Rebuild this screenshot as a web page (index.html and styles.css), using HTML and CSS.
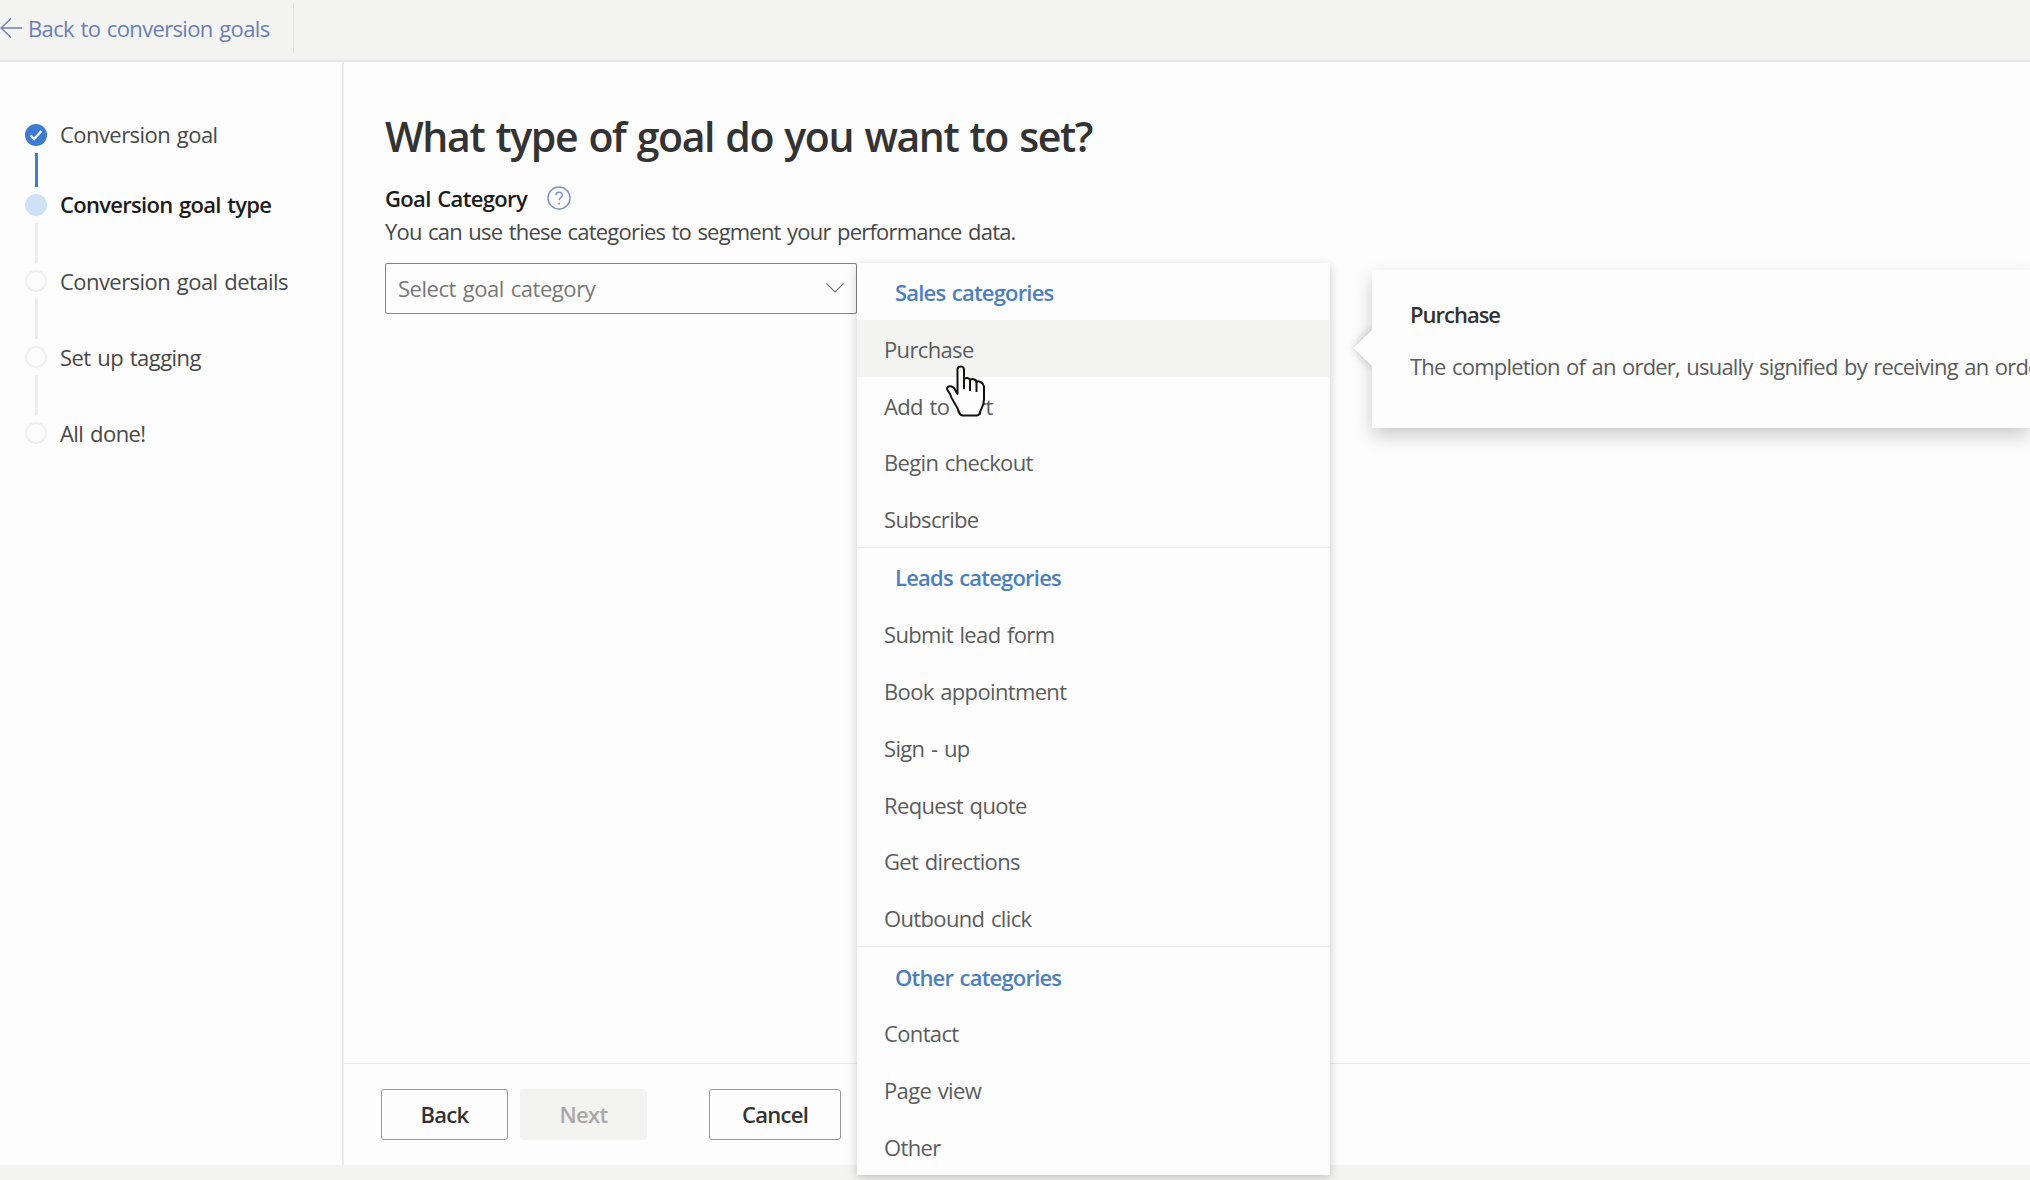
FILE: index.html
```
<!DOCTYPE html>
<html lang="en">
<head>
    <meta charset="UTF-8">
    <meta name="viewport" content="width=device-width, initial-scale=1.0">
    <title>Conversion goals</title>
    <link rel="stylesheet" href="styles.css">
</head>
<body>
    <header class="topbar">
        <a class="back-link" href="#">
            <svg class="back-arrow" viewBox="0 0 22 22"><path d="M22 11H1M11 1.5L1 11l10 9.5"/></svg>
            <span>Back to conversion goals</span>
        </a>
    </header>

    <div class="layout">
        <nav class="sidebar">
            <ol class="steps">
                <li class="step done">
                    <span class="dot"><svg viewBox="0 0 22 22"><path d="M5.5 11.5l3.5 3.5 7.5-8"/></svg></span>
                    <span class="step-name">Conversion goal</span>
                </li>
                <li class="step current">
                    <span class="dot"></span>
                    <span class="step-name">Conversion goal type</span>
                </li>
                <li class="step">
                    <span class="dot"></span>
                    <span class="step-name">Conversion goal details</span>
                </li>
                <li class="step">
                    <span class="dot"></span>
                    <span class="step-name">Set up tagging</span>
                </li>
                <li class="step">
                    <span class="dot"></span>
                    <span class="step-name">All done!</span>
                </li>
            </ol>
        </nav>

        <main class="main">
            <section class="content">
                <h1>What type of goal do you want to set?</h1>
                <div class="field-label">
                    <label>Goal Category</label>
                    <svg class="help" viewBox="0 0 24 24">
                        <circle cx="12" cy="12" r="11"/>
                        <path d="M9 9.3c0-4 6.3-4 6.3-.3 0 2.4-3.2 2.6-3.2 5.3"/>
                        <circle class="help-dot" cx="12.1" cy="17.6" r="1"/>
                    </svg>
                </div>
                <p class="hint">You can use these categories to segment your performance data.</p>

                <div class="picker">
                    <div class="select">
                        <span>Select goal category</span>
                        <svg class="chevron" viewBox="0 0 18 10"><path d="M.5.5L9 9 17.5.5"/></svg>
                    </div>
                    <div class="menu">
                        <ul class="group">
                            <li class="group-name">Sales categories</li>
                            <li class="active">Purchase</li>
                            <li>Add to cart</li>
                            <li>Begin checkout</li>
                            <li>Subscribe</li>
                        </ul>
                        <ul class="group">
                            <li class="group-name">Leads categories</li>
                            <li>Submit lead form</li>
                            <li>Book appointment</li>
                            <li>Sign - up</li>
                            <li>Request quote</li>
                            <li>Get directions</li>
                            <li>Outbound click</li>
                        </ul>
                        <ul class="group">
                            <li class="group-name">Other categories</li>
                            <li>Contact</li>
                            <li>Page view</li>
                            <li>Other</li>
                        </ul>
                    </div>
                    <div class="callout">
                        <h2>Purchase</h2>
                        <p>The completion of an order, usually signified by receiving an order</p>
                    </div>
                </div>
            </section>

            <footer class="actions">
                <button>Back</button>
                <button disabled>Next</button>
                <button class="cancel">Cancel</button>
            </footer>
        </main>
    </div>

    <svg class="pointer" viewBox="0 0 42 54">
        <path d="M12.5 30V5a3 3 0 0 1 3-2.5 3 3 0 0 1 3.5 2.5V15.500c1-2.500 6-2 6 1 1-2.500 6.500-1.500 6.500 1.500 1.500-1.500 6.500 0 7.500 4.500v13c0 6-3 9-4.500 14-.5 1.500-1.500 2-3 2H18c-2 0-3-1-3.500-2.500C12 41 7 37 5 30 3.500 27 1.500 26 2 24c1-2.500 5-2 7 0 1.500 2 2 4 3.500 6z"/>
        <path d="M19 15v10M25 16.5V27M31.5 18v10"/>
    </svg>
</body>
</html>
```
FILE: styles.css
```
* {
    box-sizing: border-box;
}
body {
    margin: 0;
    height: 1180px;
    display: flex;
    flex-direction: column;
    overflow: hidden;
    background: #f3f3f2;
    color: #4b4b4b;
    font-family: "Open Sans", "Noto Sans", sans-serif;
    font-size: 22px;
    line-height: 30px;
    letter-spacing: -0.65px;
    word-spacing: 1.5px;
}
h1, h2, p, ul, ol {
    margin: 0;
    padding: 0;
    list-style: none;
}
svg {
    display: block;
    fill: none;
}

.topbar {
    flex: none;
    height: 62px;
    padding: 3px 0 8px;
    border-bottom: 2px solid #e6e6e6;
}
.back-link {
    display: flex;
    align-items: center;
    gap: 6px;
    width: 294px;
    height: 50px;
    border-right: 1px solid #e0e0e0;
    color: #6a7fb8;
    text-decoration: none;
}
.back-arrow {
    width: 22px;
    height: 22px;
    stroke: #6a7fb8;
    stroke-width: 1.3;
}

.layout {
    display: flex;
    flex: none;
    height: 1103px;
    background: #fdfdfd;
}
.sidebar {
    width: 344px;
    padding: 62px 0 0 25px;
    border-right: 2px solid #ebebeb;
}
.step {
    position: relative;
    display: flex;
    gap: 13px;
    height: 76px;
    color: #484848;
    letter-spacing: -0.55px;
}
.step.done {
    height: 70px;
}
.dot {
    width: 22px;
    height: 22px;
    border: 2px solid #f0f0f0;
    border-radius: 50%;
}
.step-name {
    line-height: 22px;
}
.done .step-name,
.current .step-name {
    line-height: 20px;
}
.done .dot {
    border: 0;
    background: #3d7bd0;
}
.done svg {
    stroke: #fff;
    stroke-width: 2.4;
}
.current .dot {
    border: 0;
    background: #cfe1f5;
}
.current {
    color: #1b1b1b;
    font-weight: 600;
    letter-spacing: -0.7px;
}
/* line between two steps */
.step:not(:last-child)::after {
    content: "";
    position: absolute;
    left: 10px;
    top: 29px;
    bottom: 7px;
    width: 3px;
    background: #ededed;
}
.step.done::after {
    background: #4480c0;
}

.main {
    flex: 1;
    min-width: 0;
    display: flex;
    flex-direction: column;
}
.content {
    flex: 1;
    min-height: 0;
    padding: 45px 0 0 41px;
}
h1 {
    color: #333;
    font-size: 41px;
    font-weight: 600;
    line-height: 58px;
    letter-spacing: -1.4px;
    word-spacing: 2px;
}
.field-label {
    display: flex;
    align-items: center;
    gap: 20px;
    height: 34px;
    margin-top: 16px;
    color: #1b1b1b;
    font-weight: 600;
}
.help {
    width: 24px;
    height: 24px;
    stroke: #7f92c8;
    stroke-width: 1.5;
}
.help-dot {
    fill: #7f92c8;
    stroke: none;
}
.hint {
    margin-top: 1px;
    color: #484848;
    letter-spacing: -0.8px;
}

.picker {
    position: relative;
    z-index: 0;
    display: flex;
    align-items: flex-start;
    margin-top: 17px;
}
.select {
    display: flex;
    flex: none;
    align-items: center;
    justify-content: space-between;
    width: 472px;
    height: 51px;
    padding: 0 12px 2px;
    border: 1.5px solid #858585;
    border-radius: 2px;
    color: #787878;
    letter-spacing: -0.45px;
}
.chevron {
    width: 18px;
    height: 10px;
    stroke: #777;
    stroke-width: 1.2;
}
.menu {
    position: relative;
    z-index: 1;
    flex: none;
    width: 473px;
    background: #fdfdfd;
    box-shadow: 0 3px 10px rgba(0, 0, 0, 0.2);
}
.group + .group {
    border-top: 1px solid #e9e9e9;
    padding-top: 0.5px;
}
.group li {
    height: 56.8px;
    padding-left: 27px;
    color: #5c5c5c;
    line-height: 58px;
}
.group .group-name {
    padding-left: 38px;
    color: #4c80c0;
    font-weight: 600;
    letter-spacing: -0.8px;
}
.group .active {
    background: #f3f3f2;
}

.callout {
    position: relative;
    flex: none;
    width: 658px;
    height: 158px;
    margin: 7px 0 0 42px;
    padding: 29px 0 29px 38px;
    background: #fdfdfd;
    box-shadow: 0 8px 18px rgba(0, 0, 0, 0.2);
    white-space: nowrap;
}
.callout::before {
    content: "";
    position: absolute;
    left: -18px;
    top: 60px;
    width: 18px;
    height: 36px;
    background: #fdfdfd;
    clip-path: polygon(100% 0, 0 50%, 100% 100%);
}
/* soft shadow under the beak */
.callout::after {
    content: "";
    position: absolute;
    z-index: -1;
    left: -13px;
    top: 65px;
    width: 26px;
    height: 26px;
    box-shadow: 0 0 10px rgba(0, 0, 0, 0.25);
    transform: rotate(45deg);
}
.callout h2 {
    color: #333;
    font-size: 22px;
    font-weight: 600;
    line-height: 30px;
    letter-spacing: -1px;
}
.callout p {
    margin-top: 22px;
    overflow: hidden;
    color: #5c5c5c;
    letter-spacing: -0.8px;
}

.actions {
    display: flex;
    flex: none;
    height: 102px;
    padding: 25px 0 0 37px;
    border-top: 1px solid #e9e9e9;
}
button {
    width: 127px;
    height: 51px;
    margin-right: 12px;
    padding: 0 0 1px;
    background: #fdfdfd;
    border: 1px solid #999;
    border-radius: 3px;
    color: #333;
    font: 600 22px "Open Sans", "Noto Sans", sans-serif;
    letter-spacing: -0.7px;
}
button:disabled {
    background: #f3f3f2;
    border-color: #f3f3f2;
    color: #a8a8a8;
}
.cancel {
    width: 132px;
    margin-left: 50px;
}

.pointer {
    position: absolute;
    left: 945px;
    top: 364px;
    width: 42px;
    height: 54px;
    z-index: 2;
    fill: #fdfdfd;
    stroke: #111;
    stroke-width: 2;
    stroke-linejoin: round;
}
```
